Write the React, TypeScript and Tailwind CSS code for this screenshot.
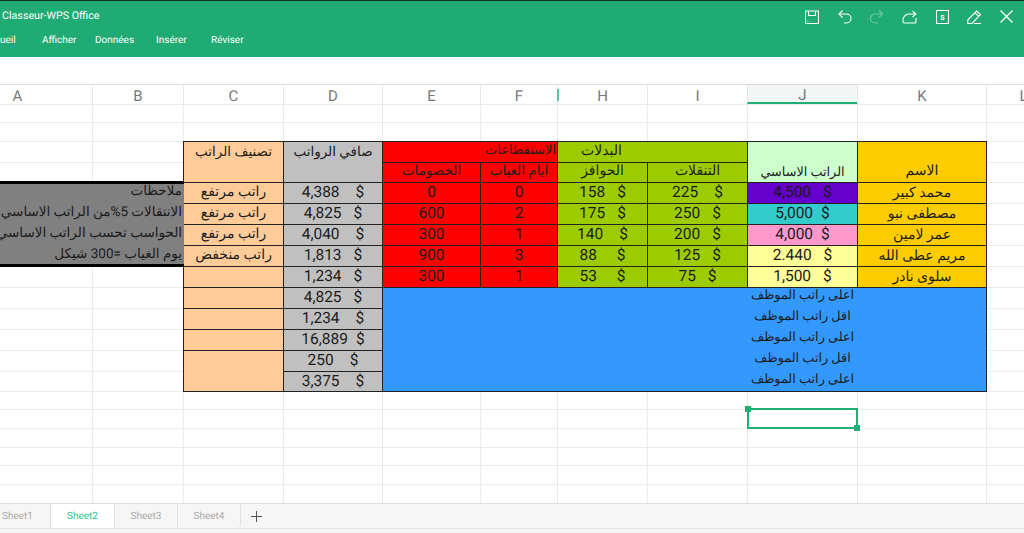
import React from "react";

const colW = [150, 91, 100, 99, 98, 77, 90, 100, 110, 129, 74];
const rowH = [18, 19, 21, 20, 21, 21, 21, 21, 21, 21, 21, 21, 21, 20, 18, 19, 19, 18, 19, 19];
const heads = ["A", "B", "C", "D", "E", "F", "H", "I", "J", "K", "L"];

type CellDef = { c: number; r: number; cs?: number; rs?: number; cls: string; node?: React.ReactNode };

const line = "border border-[#222]";
const C = "bg-[#ffcc99]";
const D = "bg-[#c0c0c0]";
const R = "bg-[#ff0000]";
const G = "bg-[#9ccc00]";
const O = "bg-[#ffcc00]";

function Money({ n, gap }: { n: string; gap: number }) {
  return (
    <div dir="ltr" className="flex h-full items-center justify-center text-[15.5px]" style={{ gap }}>
      <span>{n}</span>
      <span>$</span>
    </div>
  );
}
function Ar({ t, cls = "" }: { t: string; cls?: string }) {
  return (
    <div dir="rtl" className={`flex h-full items-center justify-center whitespace-nowrap text-[14px] ${cls}`}>
      {t}
    </div>
  );
}

const money = (c: number, bg: string | string[], items: [string, number][]): CellDef[] =>
  items.map(([n, gap], i) => ({
    c,
    r: 4 + i,
    cls: `${line} ${Array.isArray(bg) ? bg[i] : bg}`,
    node: <Money n={n} gap={gap} />,
  }));

const names = ["محمد كبير", "مصطفى نبو", "عمر لامين", "مريم عطى الله", "سلوى نادر"];
const grades = ["راتب مرتفع", "راتب مرتفع", "راتب مرتفع", "راتب منخفض", ""];
const absent = ["0", "2", "1", "3", "1"];
const disc = ["0", "600", "300", "900", "300"];
const notes = ["ملاحظات", "الانتقالات 5%من الراتب الاساسي", "الحواسب تحسب الراتب الاساسي", "يوم الغياب =300 شيكل"];
const bottom = ["اعلى راتب الموظف", "اقل راتب الموظف", "اعلى راتب الموظف", "اقل راتب الموظف", "اعلى راتب الموظف"];

const cells: CellDef[] = [
  { c: 2, r: 2, rs: 2, cls: `${line} ${C}`, node: <Ar t="تصنيف الراتب" cls="!items-start !text-[13.5px]" /> },
  { c: 3, r: 2, rs: 2, cls: `${line} ${D}`, node: <Ar t="صافي الرواتب" cls="!items-start !text-[13.5px]" /> },
  { c: 4, r: 2, cs: 2, cls: `${line} ${R}`, node: <Ar t="الاستقطاعات" cls="!justify-start !text-[13px] pr-px pb-0.5" /> },
  { c: 6, r: 2, cs: 2, cls: `${line} ${G}`, node: <Ar t="البدلات" cls="!justify-start pr-[125px] pb-0.5" /> },
  { c: 8, r: 2, rs: 2, cls: `${line} bg-[#ccffcc]`, node: <Ar t="الراتب الاساسي" cls="!items-end !text-[12.8px]" /> },
  { c: 9, r: 2, rs: 2, cls: `${line} ${O}`, node: <Ar t="الاسم" cls="!items-end" /> },
  { c: 4, r: 3, cls: `${line} ${R}`, node: <Ar t="الخصومات" cls="!text-[13.5px] pb-0.5" /> },
  { c: 5, r: 3, cls: `${line} ${R}`, node: <Ar t="ايام الغياب" cls="!text-[13.5px] pb-0.5" /> },
  { c: 6, r: 3, cls: `${line} ${G}`, node: <Ar t="الحوافز" cls="pb-0.5" /> },
  { c: 7, r: 3, cls: `${line} ${G}`, node: <Ar t="التنقلات" cls="pb-0.5" /> },
  ...grades.map((t, i) => ({ c: 2, r: 4 + i, cls: `${line} ${C}`, node: <Ar t={t} cls="pb-0.5" /> })),
  ...money(3, D, [
    ["4,388", 16], ["4,825", 12], ["4,040", 16], ["1,813", 12], ["1,234", 12],
    ["4,825", 12], ["1,234", 16], ["16,889", 8], ["250", 16], ["3,375", 16],
  ]),
  ...absent.map((t, i) => ({ c: 5, r: 4 + i, cls: `${line} ${R}`, node: <Ar t={t} cls="!text-[15.5px] font-['Roboto']" /> })),
  ...disc.map((t, i) => ({ c: 4, r: 4 + i, cls: `${line} ${R}`, node: <Ar t={t} cls="!text-[15.5px] font-['Roboto']" /> })),
  ...money(6, G, [["158", 12], ["175", 12], ["140", 16], ["88", 20], ["53", 20]]),
  ...money(7, G, [["225", 16], ["250", 12], ["200", 12], ["125", 12], ["75", 12]]),
  ...money(8, ["bg-[#6600cc]", "bg-[#33cccc]", "bg-[#ff99cc]", "bg-[#ffff99]", "bg-[#ffff99]"], [
    ["4,500", 12], ["5,000", 8], ["4,000", 8], ["2.440", 12], ["1,500", 12],
  ]),
  ...names.map((t, i) => ({ c: 9, r: 4 + i, cls: `${line} ${O}`, node: <Ar t={t} /> })),
  { c: 2, r: 9, cls: `${line} ${C}` },
  { c: 2, r: 10, cls: `${line} ${C}` },
  { c: 2, r: 11, cls: `${line} ${C}` },
  { c: 2, r: 12, rs: 2, cls: `${line} ${C}` },
  { c: 4, r: 9, cs: 6, rs: 5, cls: `${line} bg-[#3399ff]` },
  ...bottom.map((t, i) => ({ c: 8, r: 9 + i, cls: "", node: <Ar t={t} cls="!text-[12.8px] pb-1" /> })),
  {
    c: 0, r: 4, cs: 2, rs: 4,
    cls: "-mt-px border-y-[3px] border-black bg-[#808080] flex flex-col",
    node: notes.map((t) => <Ar key={t} t={t} cls="!h-[21px] shrink-0 !justify-start !text-[13.5px] pr-0.5 pb-1 -translate-y-px" />),
  },
  {
    c: 8, r: 15, cls: "relative z-10 border-2 border-[#1fae74] -mt-px",
    node: (
      <>
        <span className="absolute -left-1 -top-1 h-1.5 w-1.5 bg-[#1fae74]" />
        <span className="absolute -bottom-1 -right-1 h-1.5 w-1.5 bg-[#1fae74]" />
      </>
    ),
  },
];

function TopIcons() {
  const p = { fill: "none", stroke: "currentColor", strokeWidth: 1.1 };
  return (
    <div className="mt-px flex items-center gap-[18px] pr-[11px] text-white">
      <svg width="14" height="14" viewBox="0 0 14 14" {...p}>
        <path d="M.5 1h13v12.500H.5z" />
        <path d="M3.500 1v4.500h7V1" />
        <path d="M2.500 11.500h.8" />
      </svg>
      <svg width="14" height="14" viewBox="0 0 14 14" {...p} className="ml-px">
        <path d="M1 4h7.500a4.500 4.500 0 0 1 0 9H6" />
        <path d="M4.500 .5 1 4l3.500 3.500" />
      </svg>
      <svg width="13" height="14" viewBox="0 0 13 14" {...p} className="opacity-35">
        <path d="M12.500 4H5a4.500 4.500 0 0 0 0 9h3" />
        <path d="M9 .5 12.500 4 9 7.500" />
      </svg>
      <svg width="15" height="14" viewBox="0 0 15 14" {...p} className="ml-px">
        <path d="M14 8v3.500a1.500 1.500 0 0 1-1.500 1.500h-10A1.500 1.500 0 0 1 1 11.500V10c0-3 2.500-5.500 5-6h7.500" />
        <path d="M10.500 .8 13.800 4l-3.300 3.200" />
      </svg>
      <svg width="13" height="14" viewBox="0 0 13 14" {...p} className="ml-px">
        <path d="M.5 .5h12v13H.5z" />
        <text x="6.500" y="9.500" textAnchor="middle" fontSize="7" fontWeight="700" fill="currentColor" stroke="none" fontFamily="Roboto">S</text>
      </svg>
      <svg width="15" height="14" viewBox="0 0 15 14" {...p}>
        <path d="M.8 10 9.500 1l4 3.500L5 13.500H.8z" />
        <path d="M8 2.800l3.800 3.500" />
        <path d="M7 13.500h7" />
      </svg>
      <svg width="13" height="13" viewBox="0 0 13 13" {...p} strokeWidth={1.3}>
        <path d="M.5 .5l12 12M12.500 .5 .5 12.500" />
      </svg>
    </div>
  );
}

export default function App() {
  return (
    <div className="flex h-[533px] w-[1024px] flex-col overflow-hidden bg-white font-['Roboto','DejaVu_Sans',sans-serif] text-[#1c1c1c] [text-rendering:geometricPrecision]">
      <header className="flex h-[57px] shrink-0 flex-col border-t border-[#0d2f24] bg-[#1fab73] text-[10px] text-white">
        <div className="flex h-[27px] items-center justify-between pl-0.5 pt-[3px]">
          <span className="text-[10.7px]">Classeur-WPS Office</span>
          <TopIcons />
        </div>
        <nav className="-ml-[17px] mt-[5px] flex items-center">
          <span className="w-[59px]">Accueil</span>
          <span className="w-[53px]">Afficher</span>
          <span className="w-[61px]">Données</span>
          <span className="w-[55px]">Insérer</span>
          <span>Réviser</span>
        </nav>
      </header>
      <div className="h-[27px] shrink-0 bg-white" />
      <div className="-ml-[58px] flex h-5 shrink-0 border-t border-[#dcdcdc] text-[15px] text-[#777]">
        {heads.map((h, i) => (
          <div
            key={h}
            style={{ width: colW[i] }}
            className={`relative flex shrink-0 items-center justify-center border-l border-[#e6e6e6] pt-[3px] ${
              h === "J" ? "border-b-2 border-b-[#1fae74] bg-[#f2f6f4]" : ""
            }`}
          >
            {h}
            {h === "H" && <span className="absolute -left-px top-1 h-3 w-0.5 bg-[#1fae74]/70" />}
          </div>
        ))}
      </div>
      <div
        className="-ml-[58px] grid shrink-0"
        style={{
          gridTemplateColumns: colW.map((w) => `${w}px`).join(" "),
          gridTemplateRows: rowH.map((h) => `${h}px`).join(" "),
        }}
      >
        {rowH.flatMap((_, r) =>
          colW.map((_, c) => (
            <div
              key={`${r}-${c}`}
              className="border-l border-t border-[#ebebeb]"
              style={{ gridRow: r + 1, gridColumn: c + 1 }}
            />
          ))
        )}
        {cells.map((x, i) => (
          <div
            key={i}
            className={`-mb-px -mr-px min-w-0 ${x.cls}`}
            style={{
              gridRow: `${x.r + 1} / span ${x.rs ?? 1}`,
              gridColumn: `${x.c + 1} / span ${x.cs ?? 1}`,
            }}
          >
            {x.node}
          </div>
        ))}
      </div>
      <footer className="h-[30px] shrink-0 border-t border-[#dedede] bg-[#f6f6f6] text-[10px] text-[#aaa]">
        <div className="flex h-[24px] items-center">
          <div className="flex h-full w-[51px] items-center justify-end border-r border-[#e2e2e2] pr-[17px]">Sheet1</div>
          <div className="flex h-full w-[64px] items-center justify-center border-r border-[#e2e2e2] bg-white text-[#2fc48a]">Sheet2</div>
          <div className="flex h-full w-[63px] items-center justify-center border-r border-[#e2e2e2]">Sheet3</div>
          <div className="flex h-full w-[63px] items-center justify-center rounded-br border-r border-[#e2e2e2]">Sheet4</div>
          <svg width="11" height="11" viewBox="0 0 11 11" className="ml-[10px] text-[#555]" stroke="currentColor" strokeWidth="1" fill="none">
            <path d="M5.500 0v11M0 5.500h11" />
          </svg>
        </div>
        <div className="h-px bg-[#e6e6e6]" />
      </footer>
    </div>
  );
}
